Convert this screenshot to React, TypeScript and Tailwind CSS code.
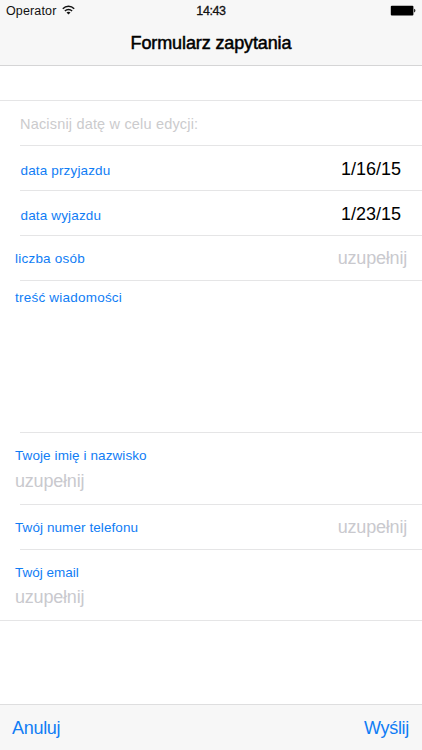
import React from "react";

const label = "text-[13.5px] leading-5 text-[#107df5] whitespace-nowrap";
const value = "text-[18px] leading-5 whitespace-nowrap";
const placeholder = "text-[18px] leading-5 text-[#c9c9ce] tracking-[-0.2px] whitespace-nowrap";

function StatusBar() {
  return (
    <div className="grid h-[22px] grid-cols-3 text-[12.5px] leading-5 text-[#111]">
      <div className="flex items-start pl-[6px] pt-[1px]">
        <span className="tracking-[0.14px]">Operator</span>
        <svg className="ml-[6px] mt-[4px]" width="13" height="10" viewBox="0 0 13 10" fill="none" stroke="#111" strokeWidth="1.5">
          <path d="M.8 3.7a8.1 8.1 0 0 1 11.4 0" />
          <path d="M2.9 6a5.1 5.1 0 0 1 7.2 0" />
          <path d="M6.5 9.6 4.5 7.6a2.9 2.9 0 0 1 4 0Z" fill="#111" stroke="none" />
        </svg>
      </div>
      <div className="pt-[1px] text-center tracking-[-0.4px] [-webkit-text-stroke:0.3px_#111]">14:43</div>
      <div className="flex justify-end pr-[6px] pt-[5px]">
        <svg width="26" height="11" viewBox="0 0 26 11">
          <rect x=".8" y=".8" width="22.6" height="9.6" rx="1" fill="#000" />
          <path d="M24.2 3.8c1.6.4 1.6 3.2 0 3.6Z" fill="#000" />
        </svg>
      </div>
    </div>
  );
}

function Divider({ full = false }: { full?: boolean }) {
  return <div className={full ? "h-px bg-[#e5e5e6]" : "ml-5 h-px bg-[#e5e5e6]"} />;
}

export default function App() {
  return (
    <div className="flex h-[750px] w-[422px] flex-col overflow-hidden bg-white font-['Liberation_Sans',Arial,sans-serif] text-black">
      <header className="h-[66px] shrink-0 border-b border-[#d5d5d6] bg-[#f7f7f7]">
        <StatusBar />
        <h1 className="pt-[11px] text-center text-[18px] leading-5 tracking-[-0.12px] [-webkit-text-stroke:0.5px_#000]">Formularz zapytania</h1>
      </header>

      <main className="flex-1">
        <div className="h-[34px]" />
        <Divider full />
        <div className="h-[44px] pl-[20px] pt-[13px]">
          <p className="text-[14.5px] leading-5 tracking-[0.18px] text-[#cbcbcd]">Nacisnij datę w celu edycji:</p>
        </div>
        <Divider />
        <div className="flex h-[44px] justify-between pl-[20.5px] pr-[21px]">
          <span className={`${label} pt-[15px] tracking-[0.15px]`}>data przyjazdu</span>
          <span className={`${value} pt-[13px]`}>1/16/15</span>
        </div>
        <Divider />
        <div className="flex h-[44px] justify-between pl-[20.5px] pr-[21px]">
          <span className={`${label} pt-[15px] tracking-[0.15px]`}>data wyjazdu</span>
          <span className={`${value} pt-[13px]`}>1/23/15</span>
        </div>
        <Divider />
        <div className="flex h-[44px] justify-between pl-[15px] pr-[15px]">
          <span className={`${label} pt-[13px] tracking-[0.22px]`}>liczba osób</span>
          <span className={`${placeholder} pt-[12px]`}>uzupełnij</span>
        </div>
        <Divider />
        <div className="h-[151px] pl-[15px] pt-[7px]">
          <p className={`${label} tracking-[0.22px]`}>treść wiadomości</p>
        </div>
        <Divider />
        <div className="h-[71px] pl-[15px] pt-[13px]">
          <p className={`${label} tracking-[0.09px]`}>Twoje imię i nazwisko</p>
          <p className={`${placeholder} mt-[5px]`}>uzupełnij</p>
        </div>
        <Divider />
        <div className="flex h-[44px] justify-between pl-[15px] pr-[15px]">
          <span className={`${label} pt-[13px] tracking-[0.08px]`}>Twój numer telefonu</span>
          <span className={`${placeholder} pt-[12px]`}>uzupełnij</span>
        </div>
        <Divider />
        <div className="h-[70px] pl-[15px] pt-[13px]">
          <p className={`${label} tracking-[0px]`}>Twój email</p>
          <p className={`${placeholder} mt-[4px]`}>uzupełnij</p>
        </div>
        <Divider full />
      </main>

      <footer className="flex h-[46px] shrink-0 justify-between border-t border-[#dededf] bg-[#f7f7f7] pl-[12px] pr-[13px] pt-[13px]">
        <button className="h-5 whitespace-nowrap text-[18px] leading-5 tracking-[-0.3px] text-[#107df5]">Anuluj</button>
        <button className="h-5 whitespace-nowrap text-[18px] leading-5 tracking-[-0.3px] text-[#107df5]">Wyślij</button>
      </footer>
    </div>
  );
}
